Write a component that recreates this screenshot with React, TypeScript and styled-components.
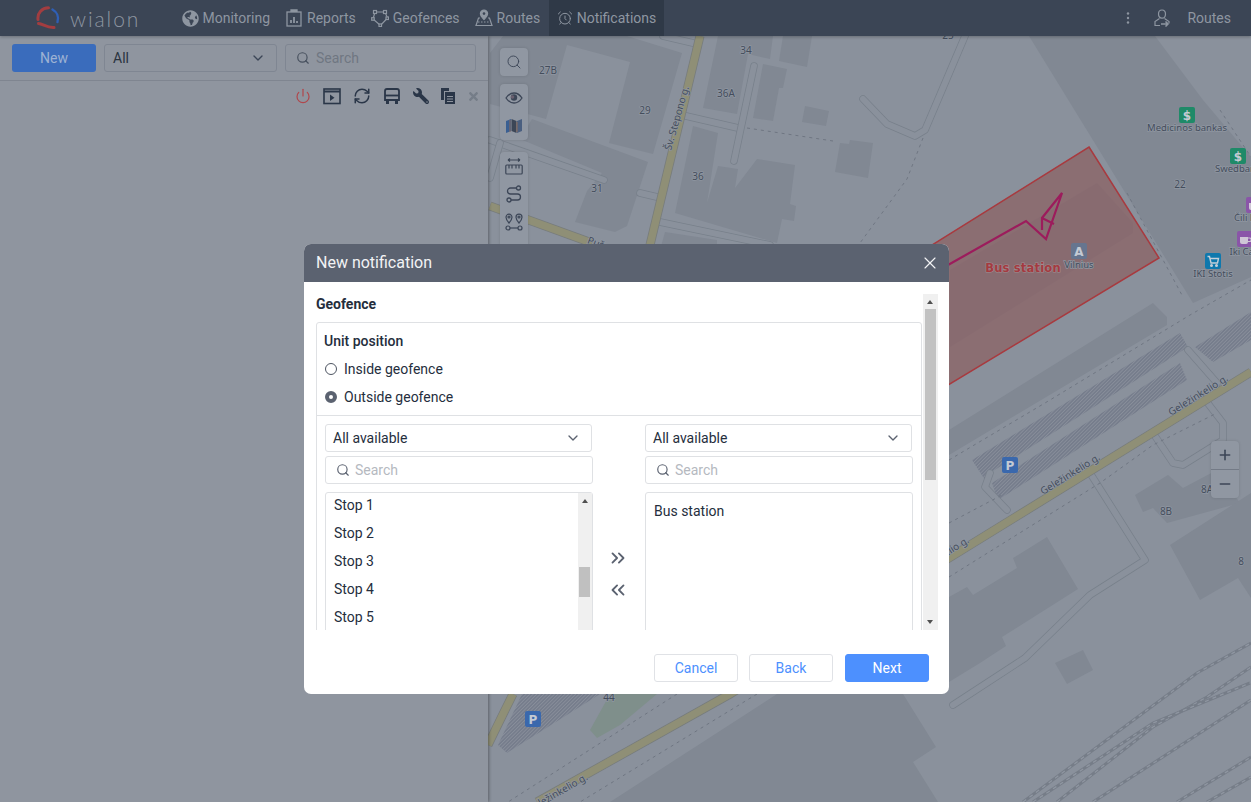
import styled, { createGlobalStyle } from 'styled-components'
import { AlarmClock, ChevronDown, ChevronsLeft, ChevronsRight, Minus, Plus, Power, RefreshCw, Search, X } from 'lucide-react'
import { FaGlobeAmericas, FaTimes, FaWrench } from 'react-icons/fa'

const GlobalStyle = createGlobalStyle`
    html, body {
        margin: 0;
        padding: 0;
    }

    body {
        font-family: Roboto, "Liberation Sans", sans-serif;
        font-size: 14px;
    }
`

// Map data, page coordinates

const buildings = [
    '503,36 627,36 682,53 653,154 609,143 630,62 567,45 546,119 490,104 490,53',
    '532,119 648,162 627,226 615,232 575,222 587,191 602,173 520,139',
    '693,126 718,133 707,203 718,166 738,169 735,188 757,159 795,165 790,204 796,206 794,221 782,219 777,243 675,213',
    '718,36 773,36 770,59 748,54 737,114 703,108',
    '783,36 812,36 807,67 779,61',
    '763,64 787,69 783,88 779,88 773,121 753,118',
    '805,106 829,111 826,126 802,122',
    '840,143 849,144 850,140 873,143 868,178 835,172',
    '665,232 717,240 717,250 660,250',
    '1029,36 1155,36 1203,100 1251,157 1251,277 1193,303',
    '949,430 1153,303 1167,317 1167,325 949,455',
    '949,597 967,587 973,595 1017,568 1013,558 1047,537 1078,589 1002,637 1006,646 980,663 949,682',
    '1055,663 1083,650 1093,670 1067,684',
    '1135,495 1168,475 1183,488 1217,470 1240,503 1167,523 1153,508 1143,512',
    '1170,545 1251,493 1251,598 1238,578 1200,600',
    '777,694 610,802 938,802 913,762 936,747 903,694',
]

const hatched = [
    '972,460 1180,333 1188,347 990,473 985,480',
    '992,483 1180,363 1187,380 998,500',
    '1195,347 1251,312 1251,340 1213,362',
    '522,694 600,694 507,753 498,745',
]

const serviceRoads = [
    'M490 140L604 180',
    'M640 193L657 197',
    'M686 116L738 128',
    'M754 66L734 161',
    'M863 99L887 124L915 136L925 130L965 36',
    'M660 222L770 245',
    'M663 36L693 43',
    'M1090 473L1145 560L1090 595L1025 658L953 705',
    'M1153 433L1173 463L1183 465L1223 440L1223 423L1203 397',
    'M1007 510L985 487L990 473',
    'M1188 350L1217 383',
    'M490 178L500 143',
]

const dottedPaths = [
    'M747 128L833 141',
    'M923 138L907 179L860 243',
    'M949 460L1050 400L1190 315L1251 280',
    'M949 523L1002 495',
    'M949 577L1100 483L1153 445L1217 413',
    'M1127 193L1183 297',
    'M1220 110L1251 157',
    'M677 694L508 802',
    'M757 694L580 802',
]

const mainRoads = [
    'M700 36L650 245',
    'M490 206L592 243',
    'M1251 372L949 558L730 694L537 802',
    'M513 694Q500 720 488 745',
]

const rails = [
    'M1023 802L1197 673L1251 643',
    'M1057 802L1153 727L1207 697L1251 667',
    'M1033 802L1153 723L1250 683',
    'M1093 802L1251 700',
    'M1177 802L1251 757',
    'M1207 802L1251 777',
]

const houseNumbers = [
    { label: '27B', x: 548, y: 74 },
    { label: '29', x: 645, y: 114 },
    { label: '34', x: 746, y: 54 },
    { label: '36A', x: 726, y: 97 },
    { label: '31', x: 597, y: 192 },
    { label: '36', x: 698, y: 180 },
    { label: '25', x: 948, y: 39 },
    { label: '22', x: 1180, y: 188 },
    { label: '8A', x: 1207, y: 493 },
    { label: '8B', x: 1166, y: 515 },
    { label: '8', x: 1241, y: 565 },
    { label: '44', x: 609, y: 701 },
]

const roadLabels = [
    { label: 'Šv. Stepono g.', x: 680, y: 119, angle: -74 },
    { label: 'Geležinkelio g.', x: 1072, y: 477, angle: -32 },
    { label: 'Geležinkelio g.', x: 1200, y: 398, angle: -32 },
    { label: 'Geležinkelio g.', x: 941, y: 560, angle: -32 },
    { label: 'Geležinkelio g.', x: 559, y: 796, angle: -30 },
    { label: 'Pušų g.', x: 603, y: 249, angle: 20 },
]

const pois = [
    { glyph: '$', color: '#1f8a68', x: 1179, y: 107, label: 'Medicinos bankas', labelX: 1187, labelY: 131 },
    { glyph: '$', color: '#1f8a68', x: 1230, y: 148, label: 'Swedbank', labelX: 1238, labelY: 172 },
    { icon: 'cup', color: '#8a55a8', x: 1246, y: 197, label: 'Čili Pica', labelX: 1251, labelY: 221 },
    { icon: 'cup', color: '#8a55a8', x: 1237, y: 231, label: 'Iki Cafe', labelX: 1246, labelY: 255 },
    { icon: 'cart', color: '#0f78ad', x: 1205, y: 253, label: 'IKI Stotis', labelX: 1213, labelY: 277 },
    { glyph: 'A', color: '#66758f', x: 1071, y: 243, label: 'Vilnius', labelX: 1079, labelY: 268 },
    { glyph: 'P', color: '#3a68ad', x: 1002, y: 457 },
    { glyph: 'P', color: '#3a68ad', x: 525, y: 711 },
]

function PoiPicture({ icon }: { icon: string }) {
    if (icon === 'cart') {
        return (
            <g fill="none" stroke="#c4ced8" strokeWidth="1.4">
                <path d="M2.5 3.5h2l1.5 6.5h6.5l1-4.5H4.8" />
                <circle cx="6.5" cy="12.5" r="0.8" fill="#c4ced8" />
                <circle cx="11.5" cy="12.5" r="0.8" fill="#c4ced8" />
            </g>
        )
    }
    return (
        <g fill="#cfc6d6">
            <path d="M3 6h8v5a2 2 0 0 1-2 2H5a2 2 0 0 1-2-2z" />
            <path d="M11 7h1.5a1.5 1.5 0 0 1 0 3.5H11" fill="none" stroke="#cfc6d6" strokeWidth="1.1" />
        </g>
    )
}

function MapDrawing() {
    return (
        <MapSvg viewBox="488 36 763 766">
            <defs>
                <pattern id="hatch" width="2.5" height="2.5" patternUnits="userSpaceOnUse" patternTransform="rotate(-45)">
                    <rect width="2.5" height="2.5" fill="#767d8c" />
                    <rect width="2.5" height="0.8" fill="#8a909c" />
                </pattern>
            </defs>
            <rect x="488" y="36" width="763" height="766" fill="#8a919c" />
            {buildings.map((points) => <polygon key={points} points={points} fill="#818893" />)}
            <polygon points="950,270 1097,183 1133,223 1133,233 950,347" fill="#868d98" />
            <polygon points="657,694 620,725 597,738 590,730 610,694" fill="#7f8f8b" />
            {hatched.map((points) => <polygon key={points} points={points} fill="url(#hatch)" />)}
            {serviceRoads.map((d) => (
                <g key={d} fill="none" strokeLinecap="round" strokeLinejoin="round">
                    <path d={d} stroke="#78808b" strokeWidth="7.5" />
                    <path d={d} stroke="#8a919c" strokeWidth="6" />
                </g>
            ))}
            {dottedPaths.map((d) => <path key={d} d={d} fill="none" stroke="#6f7682" strokeWidth="1" strokeDasharray="3 4" />)}
            {mainRoads.map((d) => (
                <g key={d} fill="none">
                    <path d={d} stroke="#777c7c" strokeWidth="9" />
                    <path d={d} stroke="#8f8f76" strokeWidth="7.5" />
                </g>
            ))}
            {rails.map((d) => (
                <g key={d} fill="none">
                    <path d={d} stroke="#767d88" strokeWidth="3" />
                    <path d={d} stroke="#8f96a1" strokeWidth="1.3" strokeDasharray="4 4" />
                </g>
            ))}
            <polygon points="1089,147 1159,258 920,402 860,290" fill="#8c3935" fillOpacity="0.4" stroke="#a83a3f" strokeWidth="1.5" />
            <path d="M948 265L1026 221L1046 239L1062 193L1042 218L1042 230M1042 218L1054 224" fill="none" stroke="#9c1c5c" strokeWidth="2.2" />
            {houseNumbers.map((n) => <MapLabel key={n.label} x={n.x} y={n.y} textAnchor="middle">{n.label}</MapLabel>)}
            {roadLabels.map((r) => (
                <MapLabel key={`${r.x}-${r.y}`} x={r.x} y={r.y} textAnchor="middle" transform={`rotate(${r.angle} ${r.x} ${r.y})`}>
                    {r.label}
                </MapLabel>
            ))}
            {pois.map((p) => (
                <g key={`${p.x}-${p.y}`}>
                    <rect x={p.x} y={p.y} width="16" height="16" rx="2" fill={p.color} />
                    {p.glyph && <PoiGlyph x={p.x + 8} y={p.y + 12.5} textAnchor="middle">{p.glyph}</PoiGlyph>}
                    {p.icon && <g transform={`translate(${p.x} ${p.y})`}><PoiPicture icon={p.icon} /></g>}
                    {p.label && <PoiLabel x={p.labelX} y={p.labelY} textAnchor="middle">{p.label}</PoiLabel>}
                </g>
            ))}
            <FenceLabel x="1023" y="272" textAnchor="middle">Bus station</FenceLabel>
        </MapSvg>
    )
}

// Hand drawn icons

function Logo() {
    return (
        <svg width="24" height="24" viewBox="0 0 24 24" fill="none" strokeLinecap="round">
            <path d="M12.5 1.8C6 1.8 1.2 7 2 13.5" stroke="#a23d40" strokeWidth="3" />
            <path d="M2.5 17.5C7 18 11 22 18 21.5" stroke="#a23d40" strokeWidth="3" />
            <path d="M16.5 3.5C21 6 23 11 21.5 16" stroke="#2f5fb5" strokeWidth="2.4" />
        </svg>
    )
}

function ReportsIcon() {
    return (
        <svg width="18" height="18" viewBox="0 0 18 18" fill="none" stroke="currentColor" strokeWidth="1.3">
            <rect x="2" y="3" width="14" height="14" />
            <path d="M6 3V1h6v2" fill="currentColor" />
            <path d="M6 14v-3M9 14V8M12 14v-2" strokeWidth="1.8" />
        </svg>
    )
}

function GeofenceIcon() {
    return (
        <svg width="18" height="18" viewBox="0 0 18 18" fill="none" stroke="currentColor" strokeWidth="1.2">
            <path d="M4 3h10l2.5 6-7 7.5L2 10z" />
            <g fill="#3b4555">
                <rect x="2.5" y="1.5" width="3" height="3" />
                <rect x="12.5" y="1.5" width="3" height="3" />
                <rect x="15" y="8" width="2.5" height="2.5" />
                <rect x="8" y="15" width="2.5" height="2.5" />
                <rect x="0.7" y="8.7" width="2.5" height="2.5" />
            </g>
        </svg>
    )
}

function RoutesIcon() {
    return (
        <svg width="18" height="18" viewBox="0 0 18 18" fill="none" stroke="currentColor" strokeWidth="1.2">
            <path d="M9 1a3.6 3.6 0 0 0-3.6 3.6C5.4 7 9 10.5 9 10.5s3.6-3.5 3.6-5.9A3.6 3.6 0 0 0 9 1z" fill="currentColor" />
            <circle cx="9" cy="4.6" r="1.3" fill="#3b4555" stroke="none" />
            <path d="M5 9H3.5L1 16.5h16L14.5 9H13" />
            <path d="M3 13h12" strokeDasharray="1.5 1.5" />
        </svg>
    )
}

function UserSwitchIcon() {
    return (
        <svg width="16" height="18" viewBox="0 0 16 18" fill="none" stroke="currentColor" strokeWidth="1.2">
            <path d="M8 1C5.6 1 4.5 3 4.5 5c0 2.4 1.4 4.2 3.500 4.2S11.500 7.400 11.500 5C11.500 3 10.400 1 8 1z" />
            <path d="M5.500 9.500L1 12.500V16.500H6M10.500 9.500l4.500 3v2" />
            <path d="M7 15h7M11.500 12.500L14 15l-2.500 2.500" strokeWidth="1.5" />
        </svg>
    )
}

function PlayerIcon() {
    return (
        <svg width="18" height="18" viewBox="0 0 18 18" fill="none" stroke="#2a3648" strokeWidth="1.6">
            <rect x="1" y="2" width="16" height="14.5" />
            <path d="M1 4.5h16" strokeWidth="2" />
            <path d="M7 7.5l4.5 3.2L7 14z" fill="#2a3648" stroke="none" />
        </svg>
    )
}

function BusIcon() {
    return (
        <svg width="18" height="18" viewBox="0 0 18 18" fill="none" stroke="#2a3648" strokeWidth="1.8">
            <path d="M2 13V4c0-1.2.8-2 2-2h10c1.2 0 2 .8 2 2v9z" />
            <path d="M2 8.500h14" />
            <path d="M3 13.500h3V17H3zM12 13.500h3V17h-3z" fill="#2a3648" stroke="none" />
        </svg>
    )
}

function CopyIcon() {
    return (
        <svg width="14" height="16" viewBox="0 0 14 16" fill="#2a3648">
            <path d="M0 0h8v3H3v9H0z" />
            <path d="M4 4h10v12H4z" />
            <path d="M6 8h6v1H6zM6 10.5h6v1H6zM6 13h6v1H6z" fill="#8f959f" />
        </svg>
    )
}

function EyeIcon() {
    return (
        <svg width="18" height="12" viewBox="0 0 18 12" fill="none" stroke="#3c4657" strokeWidth="1.3">
            <path d="M1 6c2-3 5-5 8-5s6 2 8 5c-2 3-5 5-8 5S3 9 1 6z" />
            <circle cx="9" cy="5.5" r="3.2" fill="#3c4657" stroke="none" />
            <circle cx="7.5" cy="5" r="1.8" fill="#6a6070" stroke="none" />
        </svg>
    )
}

function LayersMapIcon() {
    return (
        <svg width="16" height="14" viewBox="0 0 16 14">
            <path d="M0 2l5-2v12l-5 2z" fill="#3a5f92" />
            <path d="M5.5 0l5 2v12l-5-2z" fill="#3c4657" />
            <path d="M11 2l5-2v12l-5 2z" fill="#4a5f80" />
            <path d="M4 1v12M11 3v10" stroke="#8a6a5a" strokeWidth="1" />
        </svg>
    )
}

function RulerIcon() {
    return (
        <svg width="18" height="18" viewBox="0 0 18 18" fill="none" stroke="#3c4657" strokeWidth="1.2">
            <path d="M3 3h12M3 3l2-1.5M3 3l2 1.5M15 3l-2-1.5M15 3l-2 1.5" />
            <rect x="0.8" y="8" width="16.4" height="9" rx="1" />
            <path d="M4 8v3.5M7 8v3.5M11 8v3.5M14 8v3.5" />
        </svg>
    )
}

function RouteIcon() {
    return (
        <svg width="18" height="18" viewBox="0 0 18 18" fill="none" stroke="#3c4657" strokeWidth="1.3">
            <circle cx="13.5" cy="3" r="2" />
            <circle cx="4" cy="15" r="2" />
            <path d="M11.5 3H5.5a3 3 0 0 0 0 6h7a3 3 0 0 1 0 6H6" />
        </svg>
    )
}

function WaypointsIcon() {
    return (
        <svg width="18" height="18" viewBox="0 0 18 18" fill="none" stroke="#3c4657" strokeWidth="1.2">
            <path d="M4 10S1 6.5 1 4.2a3 3 0 0 1 6 0C7 6.5 4 10 4 10z" />
            <path d="M14 10s-3-3.5-3-5.8a3 3 0 0 1 6 0C17 6.5 14 10 14 10z" />
            <circle cx="4" cy="4" r="1" />
            <circle cx="14" cy="4" r="1" />
            <circle cx="3" cy="15" r="2" />
            <circle cx="15" cy="15" r="2" />
            <path d="M5 15h8" />
        </svg>
    )
}

function KebabIcon() {
    return (
        <svg width="4" height="14" viewBox="0 0 4 14" fill="currentColor">
            <circle cx="2" cy="2.5" r="1.2" />
            <circle cx="2" cy="7" r="1.2" />
            <circle cx="2" cy="11.5" r="1.2" />
        </svg>
    )
}

// Page

function App() {
    return (
        <>
            <GlobalStyle />
            <Page>
                <TopBar>
                    <LogoBlock>
                        <Logo />
                        <LogoText>wialon</LogoText>
                    </LogoBlock>
                    <NavItem><FaGlobeAmericas size={17} />Monitoring</NavItem>
                    <NavItem><ReportsIcon />Reports</NavItem>
                    <NavItem><GeofenceIcon />Geofences</NavItem>
                    <NavItem><RoutesIcon />Routes</NavItem>
                    <NavItem $active><AlarmClock size={16} strokeWidth={1.5} />Notifications</NavItem>
                    <TopRight>
                        <KebabIcon />
                        <UserSwitchIcon />
                        <UserName>Routes</UserName>
                    </TopRight>
                </TopBar>

                <Main>
                    <Sidebar>
                        <SidebarFilters>
                            <NewButton>New</NewButton>
                            <SidebarSelect>All<ChevronDown size={16} /></SidebarSelect>
                            <SidebarSearch><Search size={14} color="#47505e" />Search</SidebarSearch>
                        </SidebarFilters>
                        <SidebarTools>
                            <Power size={16} color="#b0474c" strokeWidth={1.8} />
                            <PlayerIcon />
                            <RefreshCw size={18} color="#2a3648" strokeWidth={2} />
                            <BusIcon />
                            <WrenchIcon size={16} color="#2a3648" />
                            <CopyIcon />
                            <FaTimes size={13} color="#757d88" />
                        </SidebarTools>
                    </Sidebar>

                    <MapPane>
                        <MapDrawing />
                        <MapControls>
                            <ControlGroup>
                                <ControlButton><Search size={16} color="#3c4657" strokeWidth={1.4} /></ControlButton>
                            </ControlGroup>
                            <ControlGroup>
                                <ControlButton><EyeIcon /></ControlButton>
                                <ControlButton><LayersMapIcon /></ControlButton>
                            </ControlGroup>
                            <ControlGroup>
                                <ControlButton><RulerIcon /></ControlButton>
                                <ControlButton><RouteIcon /></ControlButton>
                                <ControlButton><WaypointsIcon /></ControlButton>
                                <ControlButton />
                            </ControlGroup>
                        </MapControls>
                        <ZoomControls>
                            <ZoomButton><Plus size={16} strokeWidth={2.4} /></ZoomButton>
                            <ZoomButton><Minus size={16} strokeWidth={2.4} /></ZoomButton>
                        </ZoomControls>
                    </MapPane>
                </Main>

                <Dialog>
                    <DialogHeader>
                        New notification
                        <X size={20} strokeWidth={1.4} />
                    </DialogHeader>

                    <DialogBody>
                        <DialogContent>
                            <SectionTitle>Geofence</SectionTitle>
                            <Box>
                                <UnitPosition>
                                    <BoxTitle>Unit position</BoxTitle>
                                    <RadioRow><Radio />Inside geofence</RadioRow>
                                    <RadioRow><Radio $checked />Outside geofence</RadioRow>
                                </UnitPosition>
                                <Columns>
                                    <Column>
                                        <Select>All available<ChevronDown size={16} /></Select>
                                        <SearchField><Search size={14} color="#5b6270" />Search</SearchField>
                                        <ListBox>
                                            <ListItems>
                                                {[1, 2, 3, 4, 5, 6].map((n) => <ListItem key={n}>Stop {n}</ListItem>)}
                                            </ListItems>
                                            <ListScrollbar>
                                                <ArrowUp />
                                                <ListThumb />
                                            </ListScrollbar>
                                        </ListBox>
                                    </Column>
                                    <Transfer>
                                        <ChevronsRight size={22} strokeWidth={2} />
                                        <ChevronsLeft size={22} strokeWidth={2} />
                                    </Transfer>
                                    <Column>
                                        <Select>All available<ChevronDown size={16} /></Select>
                                        <SearchField><Search size={14} color="#5b6270" />Search</SearchField>
                                        <ListBox>
                                            <SelectedItems>Bus station</SelectedItems>
                                        </ListBox>
                                    </Column>
                                </Columns>
                            </Box>
                        </DialogContent>
                        <BodyScrollbar>
                            <ArrowUp />
                            <BodyThumb />
                            <ArrowDown />
                        </BodyScrollbar>
                    </DialogBody>

                    <DialogFooter>
                        <FooterButton>Cancel</FooterButton>
                        <FooterButton>Back</FooterButton>
                        <FooterButton $primary>Next</FooterButton>
                    </DialogFooter>
                </Dialog>
            </Page>
        </>
    )
}

const Page = styled.div`
    position: relative;
    width: 1251px;
    height: 802px;
    overflow: hidden;

    display: flex;
    flex-direction: column;

    background-color: #8f959f;
`

// Top bar

const TopBar = styled.header`
    position: relative;
    z-index: 2;
    flex: 0 0 36px;

    display: flex;
    align-items: stretch;

    background-color: #3b4555;
    box-shadow: 0 1px 3px #00000040;
    color: #8e96a1;
`

const LogoBlock = styled.div`
    flex: 0 0 174px;
    box-sizing: border-box;
    padding-left: 36px;

    display: flex;
    align-items: center;
    gap: 10px;
`

const LogoText = styled.span`
    font-family: Lato, sans-serif;
    font-size: 21px;
    font-weight: 300;
    letter-spacing: 1.9px;
    color: #8e96a1;
`

const NavItem = styled.div<{ $active?: boolean }>`
    padding: 0 ${({ $active }) => ($active ? '8px' : '7.5px')};
    margin-left: ${({ $active }) => ($active ? '1px' : '0')};

    display: flex;
    align-items: center;
    gap: 4px;

    background-color: ${({ $active }) => ($active ? '#2f3947' : 'transparent')};
    font-size: 14px;
`

const TopRight = styled.div`
    margin-left: auto;
    padding-right: 20px;

    display: flex;
    align-items: center;

    svg:first-child {
        margin-right: 24px;
    }
`

const UserName = styled.span`
    margin-left: 17px;
`

// Sidebar

const Main = styled.div`
    flex: 1;
    min-height: 0;

    display: flex;
`

const Sidebar = styled.aside`
    position: relative;
    z-index: 1;
    flex: 0 0 488px;

    background-color: #8f959f;
    box-shadow: 1px 0 3px #00000055;
`

const SidebarFilters = styled.div`
    height: 45px;
    box-sizing: border-box;
    padding: 8px 12px 8px;

    display: flex;
    gap: 8px;

    border-bottom: 1px solid #7f8590;
`

const NewButton = styled.div`
    flex: 0 0 84px;
    height: 28px;

    display: flex;
    align-items: center;
    justify-content: center;

    border-radius: 3px;
    background-color: #3a6cbc;
    color: #9db2d3;
`

const SidebarSelect = styled.div`
    flex: 0 0 173px;
    box-sizing: border-box;
    height: 28px;
    padding: 0 10px 0 8px;

    display: flex;
    align-items: center;
    justify-content: space-between;

    border: 1px solid #7f8692;
    border-radius: 3px;
    color: #2a3340;

    svg {
        color: #3c4657;
    }
`

const SidebarSearch = styled.div`
    flex: 0 0 191px;
    box-sizing: border-box;
    height: 28px;
    padding: 0 10px;

    display: flex;
    align-items: center;
    gap: 6px;

    border: 1px solid #7f8692;
    border-radius: 3px;
    color: #6f7782;
`

const SidebarTools = styled.div`
    height: 18px;
    padding: 6px 8px 0 0;

    display: flex;
    align-items: center;
    justify-content: flex-end;
    gap: 12px;
`

const WrenchIcon = styled(FaWrench)`
    transform: scaleX(-1);
`

// Map

const MapPane = styled.main`
    position: relative;
    flex: 1;
    min-width: 0;
`

const MapSvg = styled.svg`
    display: block;
    width: 100%;
    height: 100%;
`

const MapLabel = styled.text`
    font-family: "Noto Sans", sans-serif;
    font-size: 10px;
    fill: #444d5c;
    stroke: #8f96a1;
    stroke-width: 1.5px;
    paint-order: stroke;
`

const PoiLabel = styled(MapLabel)`
    font-size: 9.5px;
`

const PoiGlyph = styled.text`
    font-family: "DejaVu Sans", sans-serif;
    font-size: 12px;
    font-weight: 700;
    fill: #c4cad3;
`

const FenceLabel = styled.text`
    font-family: "DejaVu Sans", sans-serif;
    font-size: 11.5px;
    font-weight: 700;
    letter-spacing: 0.2px;
    fill: #a43a40;
    stroke: #a08c90;
    stroke-width: 1.2px;
    paint-order: stroke;
`

const MapControls = styled.div`
    position: absolute;
    left: 12px;
    top: 12px;

    display: flex;
    flex-direction: column;
    gap: 8px;
`

const ControlGroup = styled.div`
    width: 28px;
    border-radius: 4px;
    background-color: #9097a2;
    box-shadow: 0 0 3px #00000022;

    &:last-child {
        margin-top: 4px;
    }
`

const ControlButton = styled.div`
    height: 28px;

    display: flex;
    align-items: center;
    justify-content: center;
`

const ZoomControls = styled.div`
    position: absolute;
    right: 12px;
    top: 405px;
    width: 28px;

    border-radius: 4px;
    background-color: #9097a2;
    box-shadow: 0 0 3px #00000022;
`

const ZoomButton = styled.div`
    height: 28px;

    display: flex;
    align-items: center;
    justify-content: center;

    color: #3c4657;

    & + & {
        border-top: 1px solid #737a86;
    }
`

// Dialog

const Dialog = styled.section`
    position: absolute;
    z-index: 3;
    left: 304px;
    top: 244px;
    width: 645px;
    height: 450px;
    overflow: hidden;

    display: flex;
    flex-direction: column;

    border-radius: 7px;
    background-color: #fff;
    color: #252e3d;
`

const DialogHeader = styled.div`
    flex: 0 0 38px;
    box-sizing: border-box;
    padding: 0 9px 1px 12px;

    display: flex;
    align-items: center;
    justify-content: space-between;

    background-color: #5b6270;
    color: #f2f3f5;
    font-size: 16px;
`

const DialogBody = styled.div`
    flex: 0 0 348px;
    min-height: 0;
    padding: 12px 12px 0 12px;
    box-sizing: border-box;
    overflow: hidden;

    display: flex;
    gap: 1px;
`

const DialogContent = styled.div`
    flex: 0 0 605px;
    height: 400px;
`

const SectionTitle = styled.div`
    height: 28px;
    box-sizing: border-box;
    padding-top: 2px;

    font-weight: 700;
    font-size: 14px;
    line-height: 16px;
`

const Box = styled.div`
    box-sizing: border-box;
    height: 400px;

    border: 1px solid #dfe1e4;
    border-radius: 3px;
`

const UnitPosition = styled.div`
    height: 93px;
    box-sizing: border-box;
    padding: 10px 8px 0 7px;

    border-bottom: 1px solid #dfe1e4;
`

const BoxTitle = styled.div`
    height: 18px;
    margin-bottom: 4px;

    font-weight: 500;
    line-height: 17px;
`

const RadioRow = styled.div`
    height: 28px;

    display: flex;
    align-items: center;
    gap: 7px;
`

const Radio = styled.span<{ $checked?: boolean }>`
    width: 12px;
    height: 12px;
    box-sizing: border-box;
    margin-left: 1px;

    border-radius: 50%;
    border: ${({ $checked }) => ($checked ? '4px solid #5b6270' : '1px solid #4e5562')};
    background-color: #fff;
`

const Columns = styled.div`
    padding: 8px 8px 0 8px;

    display: grid;
    grid-template-columns: 268px 52px 268px;
`

const Column = styled.div`
    display: flex;
    flex-direction: column;
    gap: 4px;
`

const Select = styled.div`
    box-sizing: border-box;
    width: 267px;
    height: 28px;
    padding: 0 10px 0 7px;

    display: flex;
    align-items: center;
    justify-content: space-between;

    border: 1px solid #dfe1e4;
    border-radius: 3px;

    svg {
        color: #5b6270;
    }
`

const SearchField = styled.div`
    box-sizing: border-box;
    height: 28px;
    padding: 0 10px;

    display: flex;
    align-items: center;
    gap: 5px;

    border: 1px solid #dfe1e4;
    border-radius: 3px;
    color: #b5b9bf;
`

const ListBox = styled.div`
    box-sizing: border-box;
    height: 200px;
    margin-top: 4px;

    display: flex;

    border: 1px solid #dfe1e4;
    border-radius: 3px;
`

const ListItems = styled.div`
    flex: 1;
    padding-left: 8px;
`

const ListItem = styled.div`
    height: 28px;
    line-height: 24px;
`

const ListScrollbar = styled.div`
    position: relative;
    flex: 0 0 14px;
    background-color: #f0f0f0;
`

const ListThumb = styled.div`
    width: 11px;
    height: 30px;
    margin: 74px 0 0 1px;

    background-color: #c0c0c0;
`

const ArrowUp = styled.div`
    position: absolute;
    left: 50%;
    top: 6px;
    margin-left: -3.5px;

    border-left: 3.5px solid transparent;
    border-right: 3.5px solid transparent;
    border-bottom: 4px solid #505050;
`

const ArrowDown = styled.div`
    position: absolute;
    left: 50%;
    bottom: 6px;
    margin-left: -3.5px;

    border-left: 3.5px solid transparent;
    border-right: 3.5px solid transparent;
    border-top: 4px solid #505050;
`

const Transfer = styled.div`
    padding-top: 123px;
    height: 70px;

    display: flex;
    flex-direction: column;
    align-items: center;
    gap: 10px;

    color: #5b6270;

    svg {
        margin-left: -3px;
    }
`

const SelectedItems = styled.div`
    padding: 10px 8px;
    line-height: 16px;
`

const BodyScrollbar = styled.div`
    position: relative;
    flex: 0 0 15px;
    background-color: #f0f0f0;
`

const BodyThumb = styled.div`
    width: 11px;
    height: 171px;
    margin: 15px 0 0 2px;

    background-color: #c2c2c2;
`

const DialogFooter = styled.div`
    flex: 1;
    padding: 24px 20px 0 0;

    display: flex;
    justify-content: flex-end;
    gap: 11px;
`

const FooterButton = styled.div<{ $primary?: boolean }>`
    box-sizing: border-box;
    width: 84px;
    height: 28px;
    margin-left: ${({ $primary }) => ($primary ? '1px' : '0')};

    display: flex;
    align-items: center;
    justify-content: center;

    border: 1px solid ${({ $primary }) => ($primary ? '#4d90fe' : '#e0e2e6')};
    border-radius: 3px;
    background-color: ${({ $primary }) => ($primary ? '#4d90fe' : '#fff')};
    color: ${({ $primary }) => ($primary ? '#fff' : '#4d90fe')};
`

export default App
